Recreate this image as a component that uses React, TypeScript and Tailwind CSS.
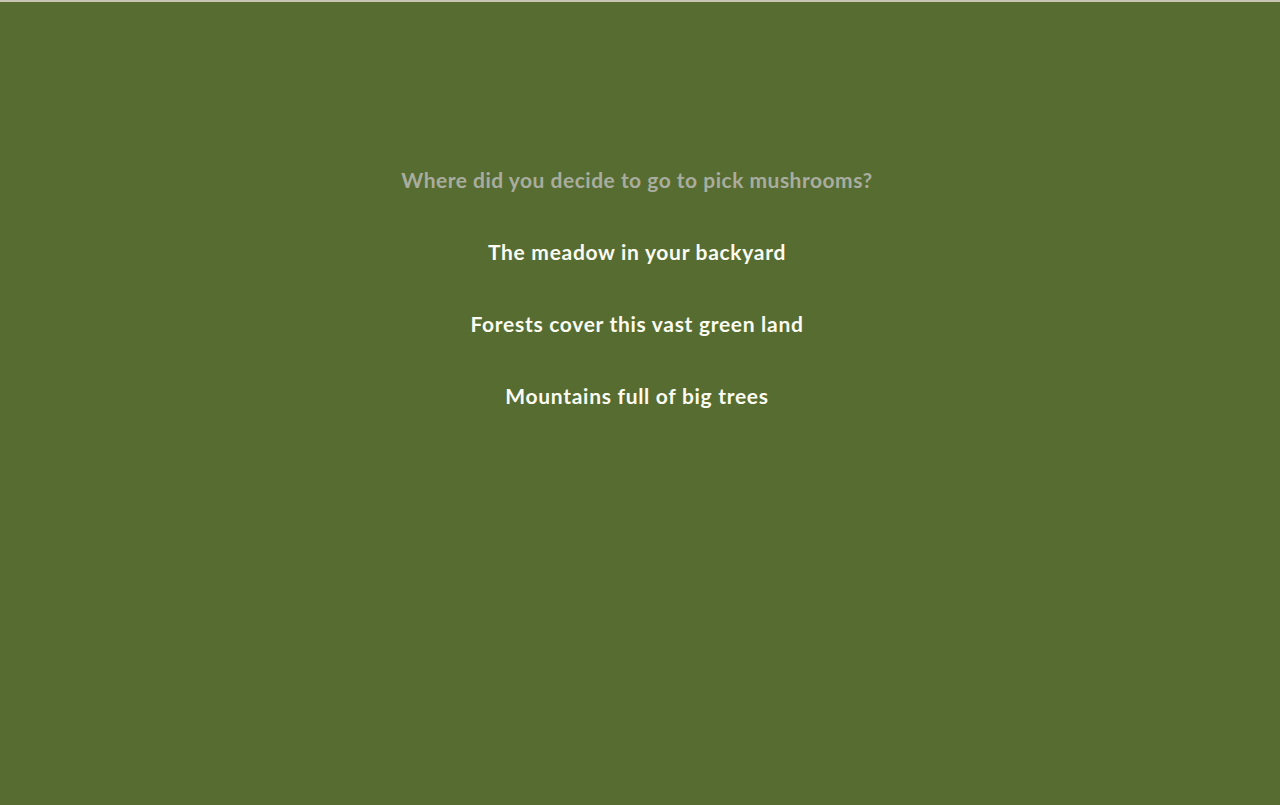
export default function App() {
  const options = [
    'The meadow in your backyard',
    'Forests cover this vast green land',
    'Mountains full of big trees',
  ];
  return (
    <div className="min-h-[805px] w-full bg-[#566c31] border-t-2 border-[#c9c6b4] font-['Lato',sans-serif] font-bold">
      <div className="flex flex-col items-center pt-[154px] pr-[6px]">
        <p className="h-[48px] leading-[48px] text-[21px] text-[#a9ad9f] tracking-[0.5px]">
          Where did you decide to go to pick mushrooms?
        </p>
        {options.map((o) => (
          <button
            key={o}
            className="mt-[24px] h-[48px] leading-[48px] text-[21px] text-[#fbfbf2] tracking-[0.7px]"
          >
            {o}
          </button>
        ))}
      </div>
    </div>
  );
}
